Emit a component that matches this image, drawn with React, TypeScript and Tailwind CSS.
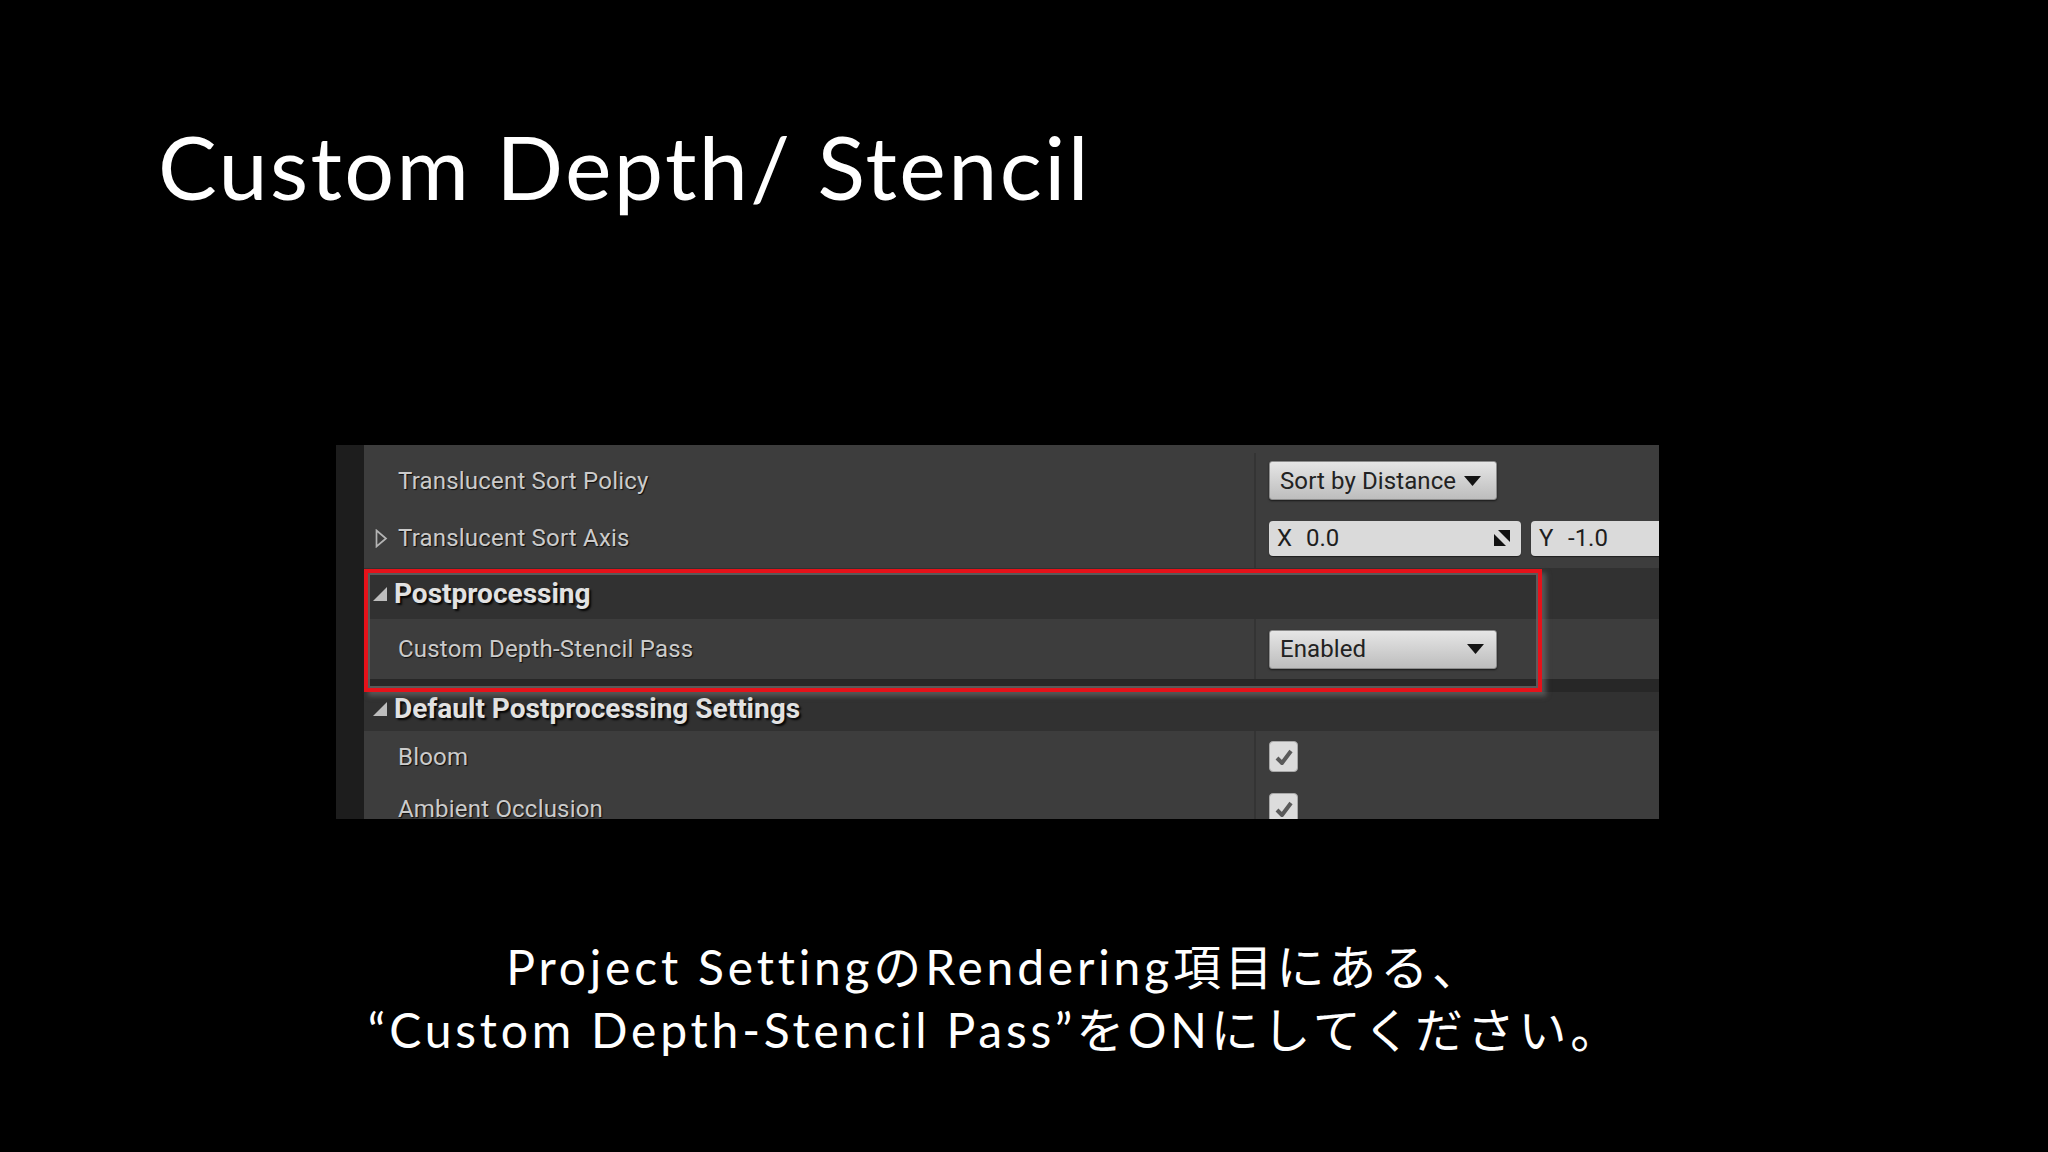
import React from "react";

const ui = "font-['Roboto','Liberation_Sans',sans-serif]";

function Caret({ className = "" }: { className?: string }) {
  return (
    <svg width="17" height="10" viewBox="0 0 17 10" className={className}>
      <polygon points="0,0 17,0 8.5,10" fill="#141414" />
    </svg>
  );
}

function Dropdown({ text, spread }: { text: string; spread?: boolean }) {
  return (
    <div
      className={`flex h-[39px] w-[228px] items-center rounded-[3px] border border-[#8c8c8c] bg-gradient-to-b from-[#e6e6e6] to-[#bdbdbd] pl-[10px] pr-[12px] shadow-[0_1px_2px_rgba(0,0,0,0.6)] ${
        spread ? "justify-between" : "gap-[8px]"
      }`}
    >
      <span className="text-[24px] leading-none tracking-[0.1px] text-[#222]">{text}</span>
      <Caret />
    </div>
  );
}

function Field({ axis, value, icon, width }: { axis: string; value: string; icon?: boolean; width: string }) {
  return (
    <div className={`flex h-[35px] ${width} shrink-0 items-center rounded-[4px] bg-[#dadada] pl-[8px] pr-[9px] shadow-[0_1px_1px_rgba(0,0,0,0.5)]`}>
      <span className="w-[29px] text-[24px] leading-none text-[#1e1e1e]">{axis}</span>
      <span className="flex-1 text-[24px] leading-none text-[#1e1e1e]">{value}</span>
      {icon && (
        <svg width="20" height="20" viewBox="0 0 20 20">
          <polygon points="6,2 18,2 18,14" fill="#111" />
          <polygon points="2,6 2,18 14,18" fill="#111" />
        </svg>
      )}
    </div>
  );
}

function Check() {
  return (
    <div className="flex h-[31px] w-[29px] items-center justify-center rounded-[4px] border border-[#a8a8a8] bg-[#dcdcdc]">
      <svg width="20" height="18" viewBox="0 0 20 18">
        <path d="M3 10 L8 15 L17 3" fill="none" stroke="#5a5a5a" strokeWidth="4" strokeLinejoin="round" />
      </svg>
    </div>
  );
}

function Row({
  label,
  h,
  pt = "",
  arrow,
  children,
}: {
  label: string;
  h: string;
  pt?: string;
  arrow?: boolean;
  children?: React.ReactNode;
}) {
  return (
    <div className={`flex ${h} ${pt} shrink-0 bg-[#3d3d3d]`}>
      <div className="flex w-[892px] items-center border-r-2 border-[#343434]">
        <div className="flex w-[34px] justify-center pl-[1px]">
          {arrow && (
            <svg width="13" height="19" viewBox="0 0 13 19">
              <polygon points="1.5,1.5 11,9.5 1.5,17.5" fill="none" stroke="#b4b4b4" strokeWidth="1.7" />
            </svg>
          )}
        </div>
        <span className="text-[24px] leading-none tracking-[0.2px] text-[#cbcbcb] [text-shadow:1px_1px_1px_rgba(0,0,0,0.8)]">
          {label}
        </span>
      </div>
      <div className="flex flex-1 items-center gap-[10px] pl-[13px]">{children}</div>
    </div>
  );
}

function Header({ label, h, pb = "" }: { label: string; h: string; pb?: string }) {
  return (
    <div className={`flex ${h} ${pb} shrink-0 items-center bg-[#313131]`}>
      <div className="flex w-[30px] justify-center pl-[1px]">
        <svg width="14" height="14" viewBox="0 0 14 14">
          <polygon points="14,0 14,14 0,14" fill="#bdbdbd" />
        </svg>
      </div>
      <span className="text-[28px] font-bold leading-none text-[#e2e2e2] [text-shadow:2px_2px_2px_rgba(0,0,0,0.9)]">
        {label}
      </span>
    </div>
  );
}

export default function App() {
  return (
    <div className="h-[1152px] w-[2048px] overflow-hidden bg-black">
      <h1 className="ml-[158px] pt-[122px] font-['Lato','Open_Sans',sans-serif] text-[88px] font-normal leading-none tracking-[2.4px] text-white">
        Custom Depth/ Stencil
      </h1>

      <div className={`relative ml-[336px] mt-[235px] flex h-[374px] w-[1323px] overflow-hidden ${ui}`}>
        <div className="w-[28px] shrink-0 bg-[#1d1d1d]" />
        <div className="flex flex-1 flex-col">
          <Row label="Translucent Sort Policy" h="h-[63px]" pt="pt-[8px]">
            <Dropdown text="Sort by Distance" />
          </Row>
          <Row label="Translucent Sort Axis" h="h-[60px]" arrow>
            <Field axis="X" value="0.0" icon width="w-[252px]" />
            <Field axis="Y" value="-1.0" width="w-[200px]" />
          </Row>
          <Header label="Postprocessing" h="h-[51px]" />
          <Row label="Custom Depth-Stencil Pass" h="h-[60px]">
            <Dropdown text="Enabled" spread />
          </Row>
          <div className="h-[13px] shrink-0 bg-[#272727]" />
          <Header label="Default Postprocessing Settings" h="h-[39px]" pb="pb-[6px]" />
          <Row label="Bloom" h="h-[51px]">
            <Check />
          </Row>
          <Row label="Ambient Occlusion" h="h-[53px]">
            <Check />
          </Row>
        </div>

        <div className="absolute left-[28px] top-[124px] h-[123px] w-[1178px] border-[4px] border-[#e5121a] shadow-[inset_0_0_0_2px_rgba(95,95,95,0.9),4px_4px_5px_rgba(120,120,120,0.55)]" />
      </div>

      <div className="mt-[116px] flex flex-col items-center pr-[58px] font-['Lato','Noto_Sans_CJK_JP',sans-serif] text-[48px] leading-[63px] tracking-[3.8px] text-white">
        <p>Project SettingのRendering項目にある、</p>
        <p>“Custom Depth-Stencil Pass”をONにしてください。</p>
      </div>
    </div>
  );
}
